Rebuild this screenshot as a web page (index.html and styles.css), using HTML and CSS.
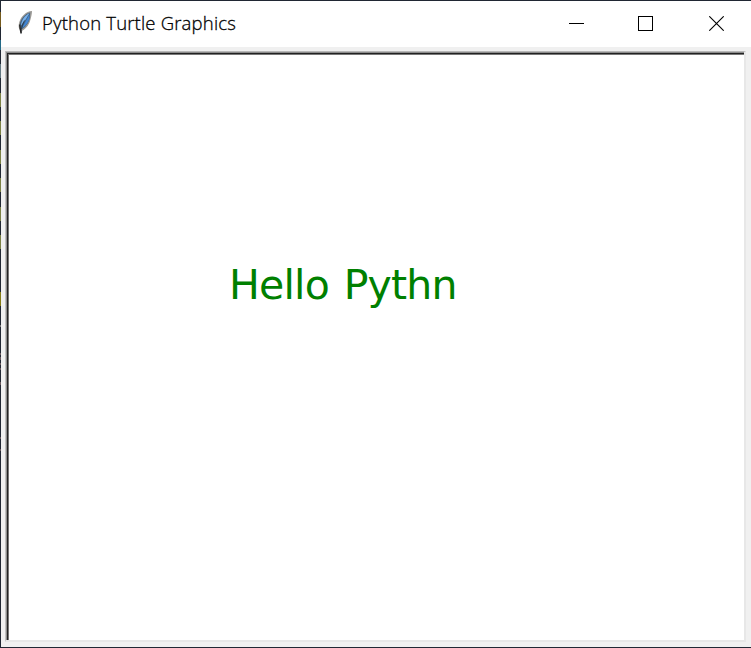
FILE: index.html
```
<!DOCTYPE html>
<html lang="en">
<head>
<meta charset="utf-8">
<title>Python Turtle Graphics</title>
<link rel="stylesheet" href="styles.css">
</head>
<body>
<div class="desktop">
  <main class="window">
    <header class="titlebar">
      <svg class="feather" width="16" height="24" viewBox="0 0 16 24">
        <path d="M15 0C9 .5 4.5 5 2.5 10.5C1 14.5 1.7 18 3.4 19L4 23.5L5.4 19.5C9.5 17.5 12.5 13 13.6 8C14.3 5 15 3 15 0Z" fill="#9c9a96"/>
        <path d="M13.2 1.6C8 3 4.6 7.5 3 12L3.2 17L4.2 18.3C8.3 16.5 11.8 12 12.8 7Z" fill="#41607f"/>
        <path d="M12.5 2.2C8 4 4.3 9 3.8 14.8L9 8Z" fill="#78b0ea"/>
        <path d="M12.4 3.5L5 17C9 15 11.7 11 12.4 7Z" fill="#4286d4"/>
        <path d="M7.5 9.5C5.8 12.5 4.5 16 4 22.8" fill="none" stroke="#1b2632" stroke-width=".7"/>
        <path d="M2.7 13.5L3.2 18L4.1 22" fill="none" stroke="#252525" stroke-width="1.4"/>
      </svg>
      <h1 class="title">Python Turtle Graphics</h1>
      <div class="controls">
        <svg width="15" height="15" viewBox="0 0 15 15" shape-rendering="crispEdges"><path d="M0 7.5H15" stroke="#000"/></svg>
        <svg width="15" height="15" viewBox="0 0 15 15" shape-rendering="crispEdges"><rect x=".5" y=".5" width="14" height="14" fill="none" stroke="#000"/></svg>
        <svg width="15" height="15" viewBox="0 0 15 15"><path d="M.3.3L14.7 14.7M14.7.3L.3 14.7" stroke="#000" stroke-width="1.1"/></svg>
      </div>
    </header>
    <div class="client">
      <div class="bevel">
        <div class="canvas"><p class="message">Hello Pythn</p></div>
      </div>
    </div>
  </main>
</div>
</body>
</html>
```
FILE: styles.css
```
* { box-sizing: border-box; }
body { margin: 0; }
.desktop {
  width: 751px;
  height: 648px;
  padding: 1px 0 1px 1px;
  background:
    linear-gradient(#202733, #202733) 1px 0 / 750px 1px no-repeat,
    linear-gradient(#202733, #202733) 0 647px / 751px 1px no-repeat,
    linear-gradient(#202733 0 12px, #745a1d 12px 27px, #202733 27px 40px,
      #246a87 40px 50px, #202733 50px 64px, #617780 64px 78px, #202733 78px 93px,
      #7b8145 93px 107px, #202733 107px 121px, #7b8145 121px 135px, #202733 135px 150px,
      #7b8145 150px 164px, #202733 164px 178px, #7b8145 178px 192px, #202733 192px 207px,
      #7b8145 207px 221px, #202733 221px 235px, #7b8145 235px 249px, #202733 249px 292px,
      #847c16 292px 306px, #202733 306px 325px, #777 325px 327px, #202733 327px 353px,
      #66575b 353px 355px, #202733 355px 357px, #66575b 357px 360px, #202733 360px 363px,
      #66575b 363px 365px, #202733 365px 368px, #66575b 368px 370px, #202733 370px 382px,
      #66575b 382px 385px, #202733 385px 437px, #66575b 437px 439px, #202733 439px 449px,
      #66575b 449px 451px, #202733 451px);
}
.window {
  display: flex;
  flex-direction: column;
  height: 646px;
  background: #f0f0f0;
}
.titlebar {
  display: flex;
  align-items: center;
  height: 46px;
  padding: 0 27px 0 16px;
  background: #fff;
}
.feather { margin-top: -2px; }
.title {
  margin: -2px 0 0 9px;
  font: 350 18.5px/28px "Open Sans", "Noto Sans", sans-serif;
  letter-spacing: 0.18px;
  -webkit-text-stroke: 0.3px #000;
  white-space: nowrap;
  color: #000;
}
.controls {
  display: flex;
  gap: 55px;
  margin: -1px 0 0 auto;
}
.controls svg:nth-child(2) { margin-right: 1px; margin-left: -1px; }
.client {
  flex: 1;
  padding: 4px 5px 5px 4px;
}
.bevel {
  height: 100%;
  border: solid;
  border-width: 1px 2px 2px 1px;
  border-color: #b8b8b8 #e7e7e7 #e7e7e7 #c0c0c0;
}
.canvas {
  height: 100%;
  padding: 3px 0 0 3px;
  background: #fff;
  box-shadow: inset 1px 1px #8c8c8c, inset 2px 2px #222, inset 3px 3px #777;
}
.message {
  margin: 0;
  padding: 205px 0 0 220px;
  font: 41px/50px "DejaVu Sans", Verdana, sans-serif;
  letter-spacing: -0.8px;
  word-spacing: 2.5px;
  white-space: nowrap;
  color: #008000;
}
```
